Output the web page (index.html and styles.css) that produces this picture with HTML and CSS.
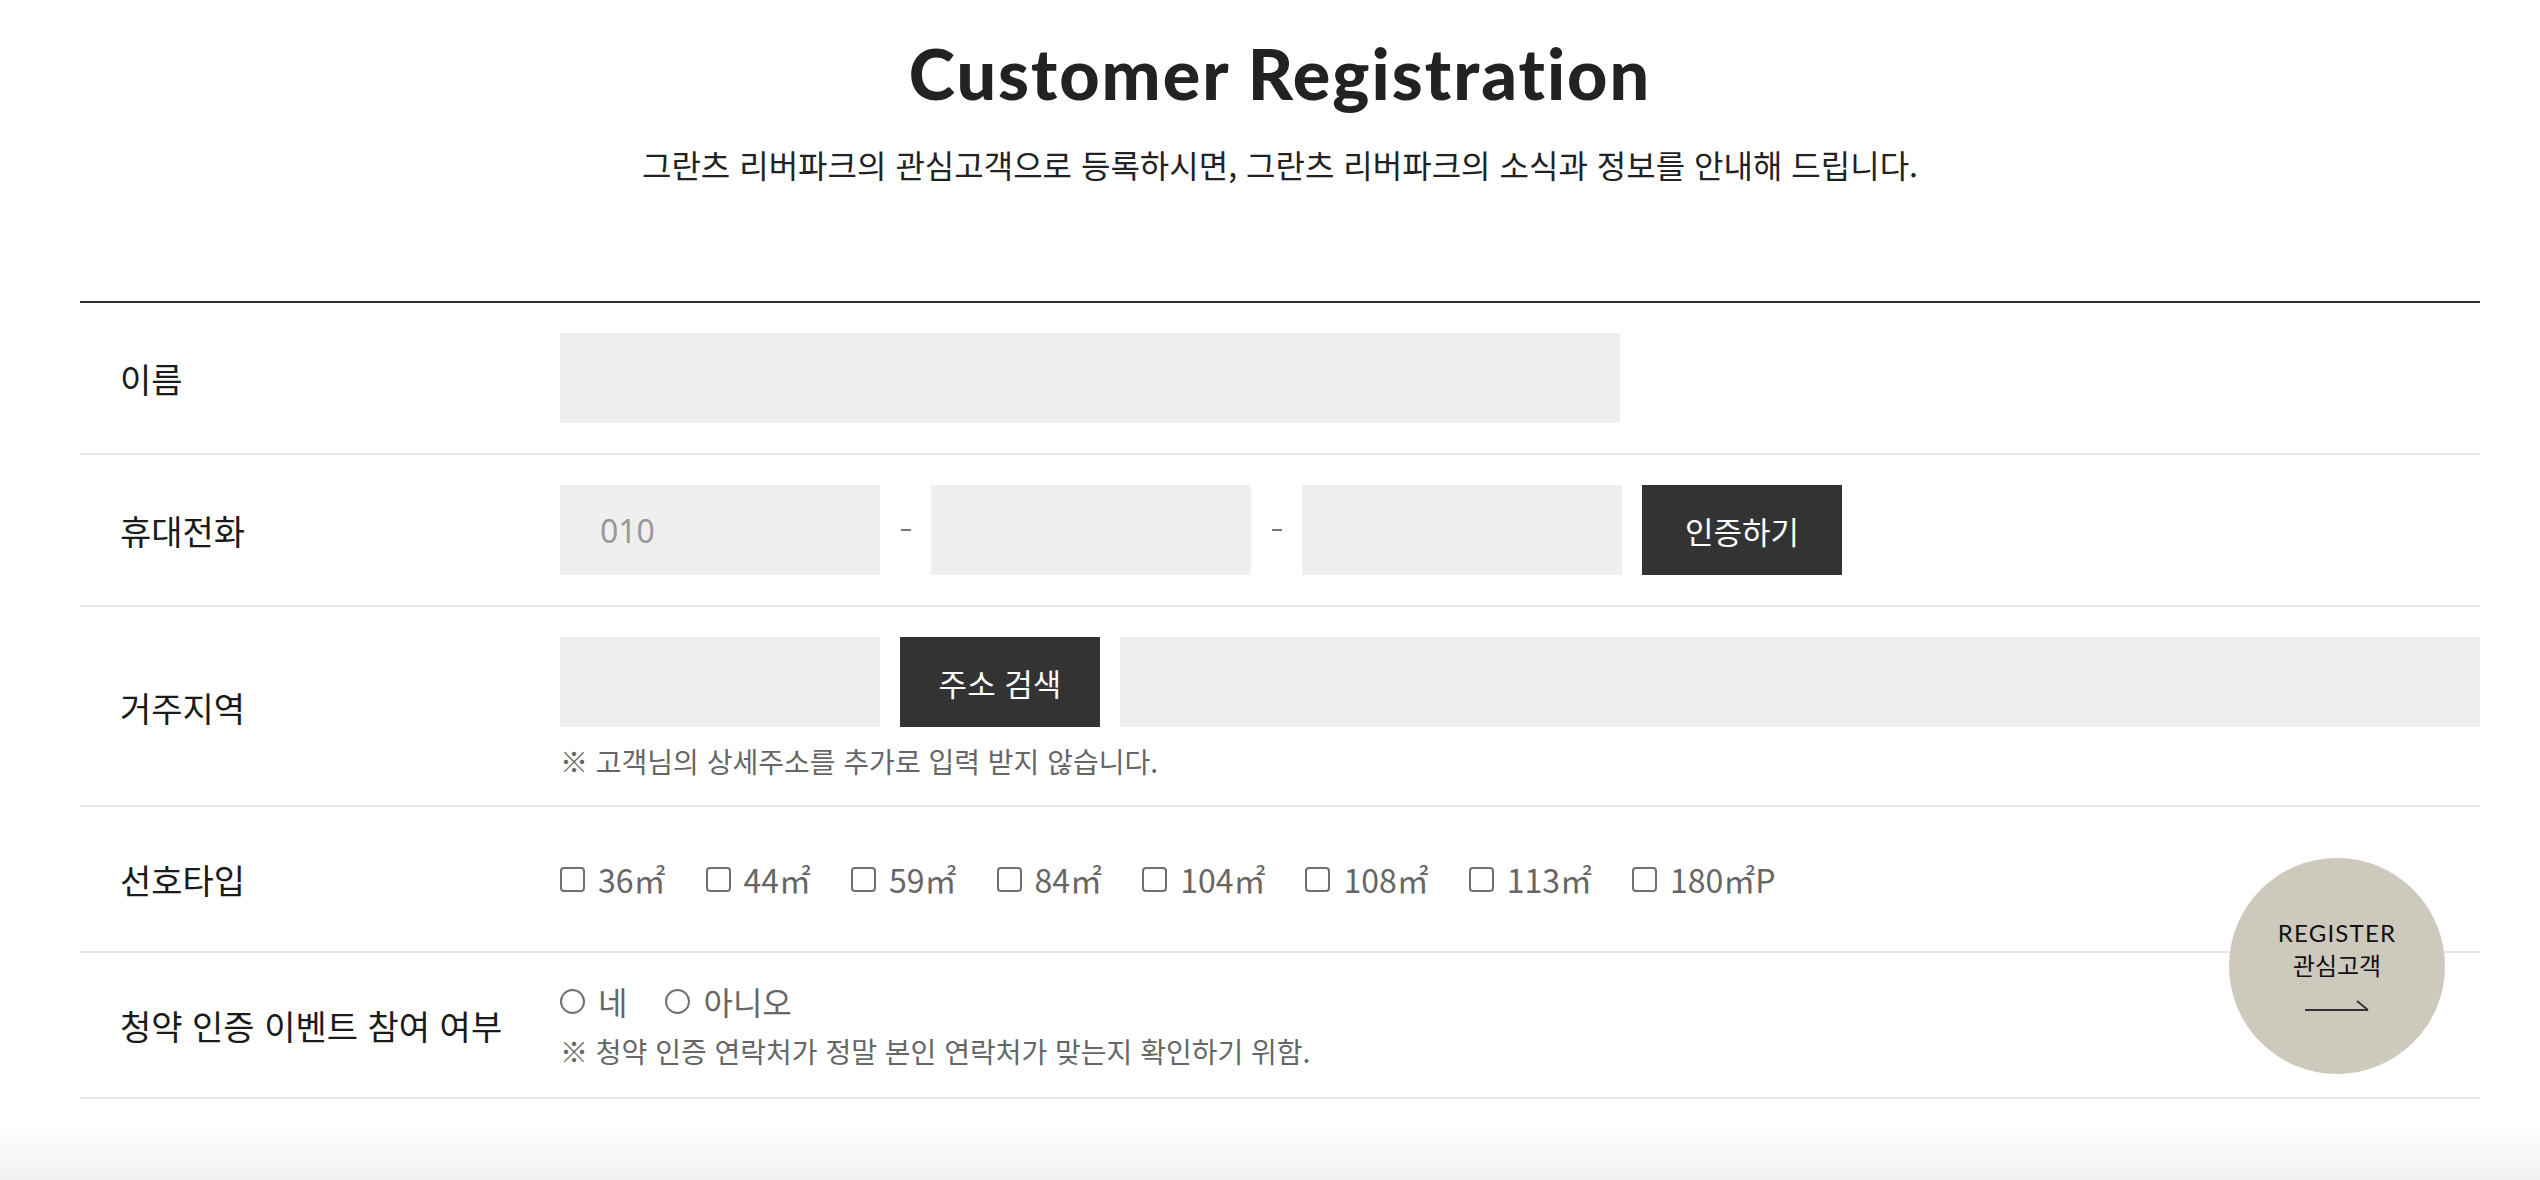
FILE: index.html
```html
<!DOCTYPE html>
<html lang="ko">
<head>
<meta charset="utf-8">
<title>Customer Registration</title>
<link rel="stylesheet" href="styles.css">
</head>
<body>
<div class="page">
  <header class="head">
    <h1 class="title">Customer Registration</h1>
    <p class="sub">그란츠 리버파크의 관심고객으로 등록하시면, 그란츠 리버파크의 소식과 정보를 안내해 드립니다.</p>
  </header>

  <div class="form">
    <div class="row">
      <div class="label">이름</div>
      <div class="field">
        <div class="input input-name"></div>
      </div>
    </div>

    <div class="row">
      <div class="label">휴대전화</div>
      <div class="field line">
        <div class="input input-short"><span class="ph">010</span></div>
        <span class="dash"></span>
        <div class="input input-short"></div>
        <span class="dash"></span>
        <div class="input input-short"></div>
        <button class="btn btn-auth">인증하기</button>
      </div>
    </div>

    <div class="row row-addr">
      <div class="label">거주지역</div>
      <div class="field">
        <div class="line">
          <div class="input input-short"></div>
          <button class="btn btn-addr">주소 검색</button>
          <div class="input input-grow"></div>
        </div>
        <p class="note note-addr">※ 고객님의 상세주소를 추가로 입력 받지 않습니다.</p>
      </div>
    </div>

    <div class="row row-type">
      <div class="label">선호타입</div>
      <div class="field checks">
        <label class="opt"><span class="box"></span>36㎡</label>
        <label class="opt"><span class="box"></span>44㎡</label>
        <label class="opt"><span class="box"></span>59㎡</label>
        <label class="opt"><span class="box"></span>84㎡</label>
        <label class="opt"><span class="box"></span>104㎡</label>
        <label class="opt"><span class="box"></span>108㎡</label>
        <label class="opt"><span class="box"></span>113㎡</label>
        <label class="opt"><span class="box"></span>180㎡P</label>
      </div>
    </div>

    <div class="row">
      <div class="label">청약 인증 이벤트 참여 여부</div>
      <div class="field">
        <div class="radios">
          <label class="opt"><span class="radio"></span>네</label>
          <label class="opt"><span class="radio"></span>아니오</label>
        </div>
        <p class="note note-event">※ 청약 인증 연락처가 정말 본인 연락처가 맞는지 확인하기 위함.</p>
      </div>
    </div>
  </div>
</div>

<a class="fab">
  <span class="fab-en">REGISTER</span>
  <span class="fab-ko">관심고객</span>
  <svg class="fab-arrow" width="64" height="12" viewBox="0 0 64 12"><path d="M0 11H63M52 2L63 11" fill="none" stroke="#333" stroke-width="1.8"/></svg>
</a>

<div class="shade"></div>
</body>
</html>
```

FILE: styles.css
```css
* { box-sizing: border-box; }
html, body { margin: 0; padding: 0; background: #fff; }
body {
  font-family: "Noto Sans CJK KR", "Noto Sans", sans-serif;
  color: #222;
  width: 2540px;
  height: 1180px;
  overflow: hidden;
}
.page { padding: 0 60px 0 80px; }

.head { text-align: center; height: 301px; padding-top: 33px; }
.title {
  margin: 0;
  font-family: "Lato", "Noto Sans", sans-serif;
  font-weight: 900;
  font-size: 70px;
  line-height: 80px;
  letter-spacing: 2px;
  color: #222;
}
.sub {
  margin: 31px 0 0;
  font-size: 32px;
  line-height: 40px;
  color: #222;
}

.form { border-top: 2px solid #333; }
.row {
  display: grid;
  grid-template-columns: 480px 1fr;
  align-items: center;
  padding: 30px 0;
  border-bottom: 2px solid #e5e5e5;
}
.row-addr { padding-bottom: 28px; }
.label { padding-left: 40px; font-size: 34px; color: #1a1a1a; }
.field { min-width: 0; }
.line { display: flex; align-items: center; }

.input { height: 90px; background: #efefef; display: flex; align-items: center; }
.input-name { width: 1060px; }
.input-short { width: 320px; }
.input-grow { flex: 1; margin-left: 20px; }
.ph { padding-left: 40px; font-family: "Noto Sans", sans-serif; font-size: 32px; color: #999; }
.dash { width: 10px; height: 2px; background: #777; margin: 0 20px 0 21px; }

.btn {
  height: 90px;
  width: 200px;
  border: 0;
  background: #333;
  color: #fff;
  font-family: "Noto Sans CJK KR", sans-serif;
  font-size: 31px;
  font-weight: 400;
  padding: 0;
}
.btn-auth { margin-left: 20px; }
.btn-addr { margin-left: 20px; }

.note { margin: 18px 0 0; font-size: 28px; line-height: 32px; color: #666; }
.note-event { margin-top: 16px; }

.row-type .field { min-height: 84px; }
.checks { display: flex; align-items: center; gap: 40px; }
.opt { display: flex; align-items: center; gap: 13px; font-size: 32px; line-height: 36px; color: #666; }
.box { width: 25px; height: 25px; border: 2px solid #707070; border-radius: 4px; display: block; }
.radios { display: flex; align-items: center; gap: 38px; height: 36px; }
.radio { width: 25px; height: 25px; border: 2px solid #707070; border-radius: 50%; display: block; }

.fab {
  position: absolute;
  left: 2229px;
  top: 858px;
  width: 216px;
  height: 216px;
  border-radius: 50%;
  background: #cec9bd;
  display: flex;
  flex-direction: column;
  align-items: center;
  padding-top: 59px;
  color: #111;
}
.fab-en { font-family: "Lato", sans-serif; font-size: 24px; line-height: 32px; letter-spacing: 1.2px; }
.fab-ko { font-size: 24px; line-height: 32px; }
.fab-arrow { margin-top: 18px; display: block; }

.shade {
  position: fixed;
  left: 0; right: 0; bottom: 0;
  height: 55px;
  background: linear-gradient(to bottom, rgba(240,240,240,0), #f1f1f1);
  pointer-events: none;
}
```
